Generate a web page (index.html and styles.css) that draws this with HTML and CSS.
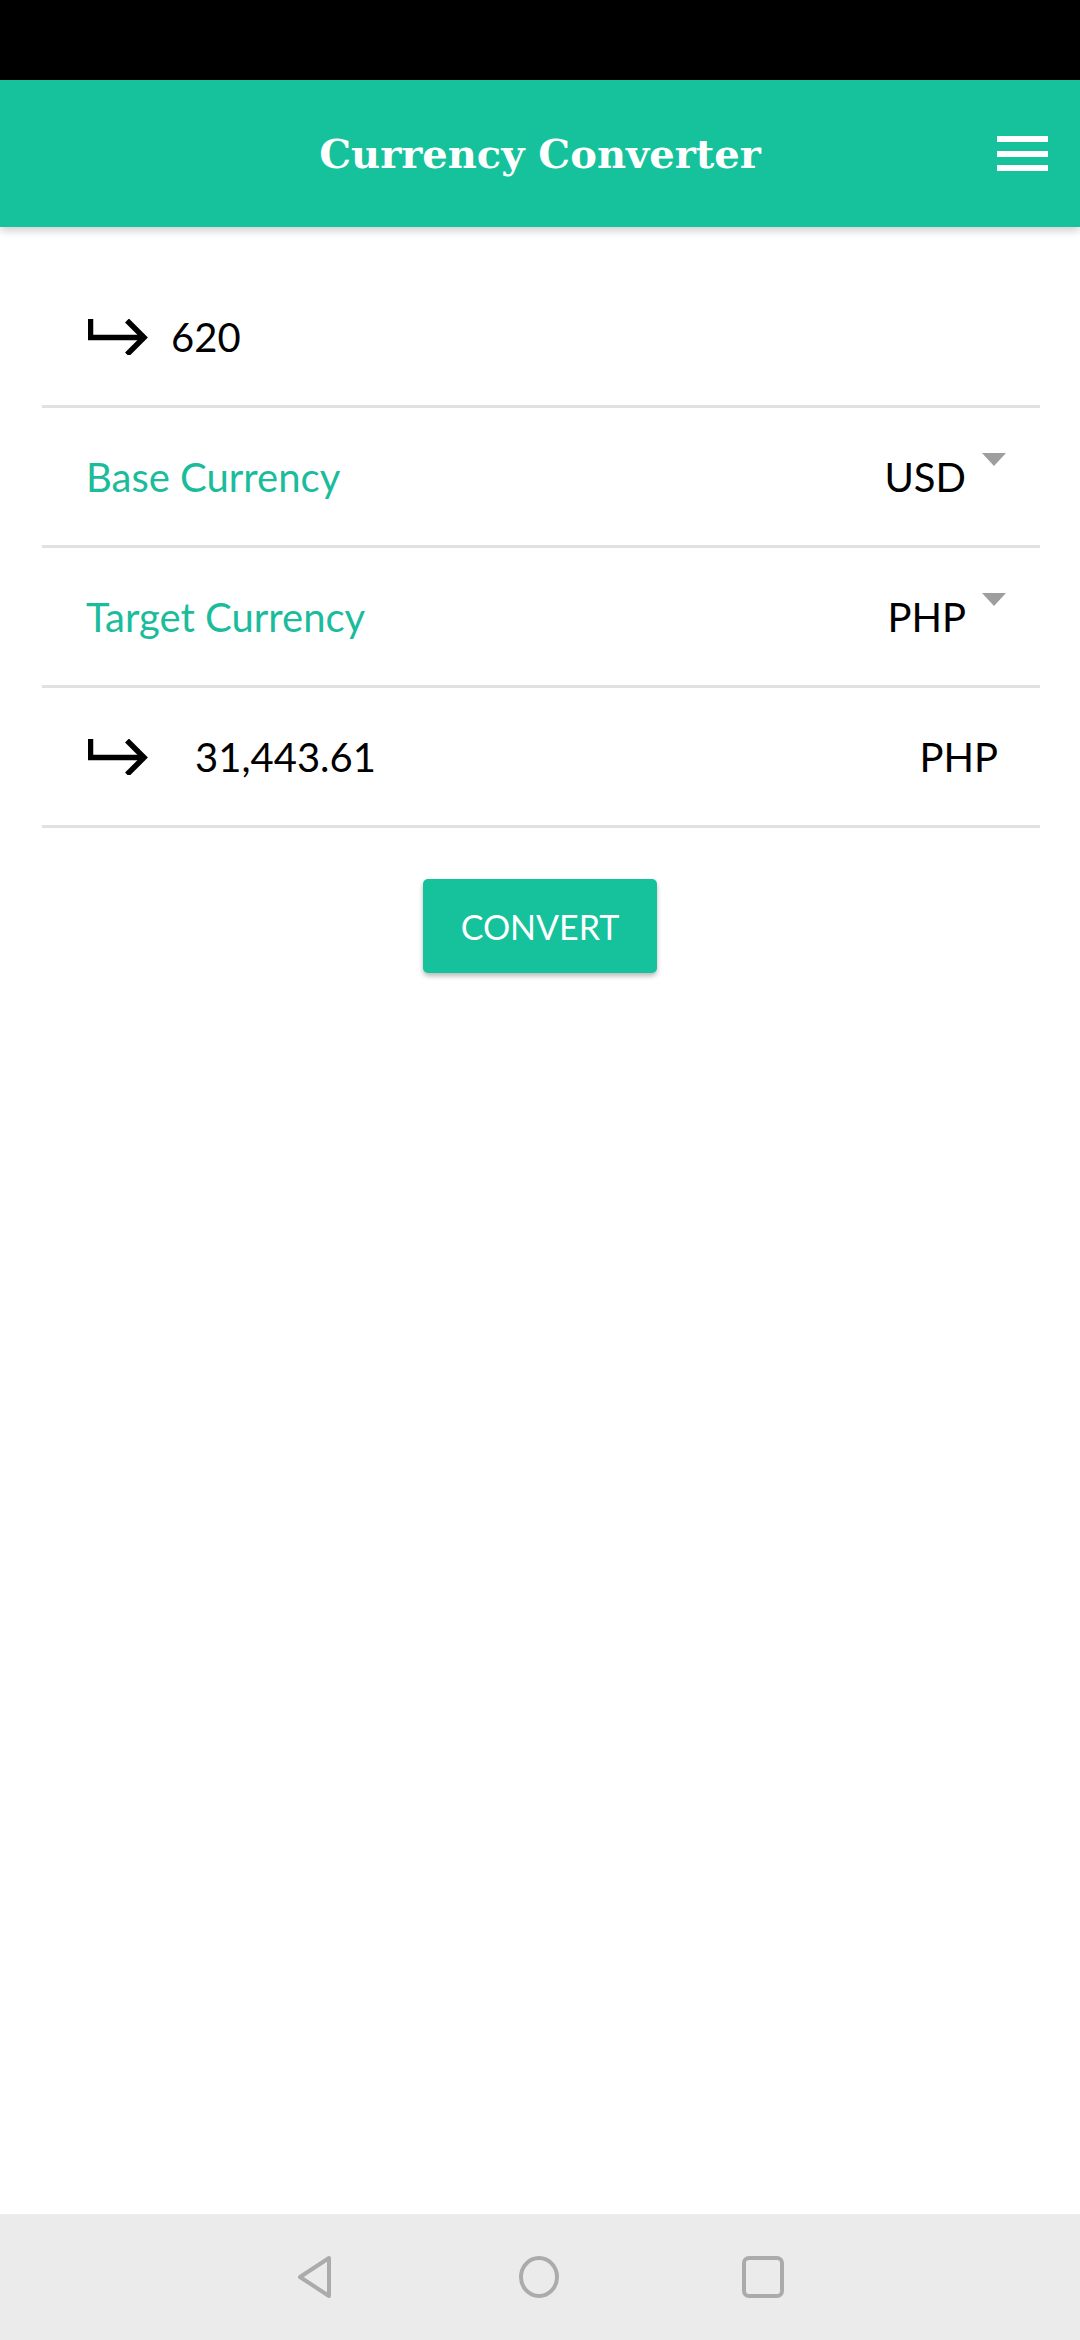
FILE: index.html
```html
<!DOCTYPE html>
<html>
<head>
<meta charset="utf-8">
<link rel="stylesheet" href="styles.css">
</head>
<body>
<div class="statusbar"></div>
<header class="appbar">
  <span></span>
  <h1 class="title">Currency Converter</h1>
  <button class="menu" aria-label="menu"><span></span><span></span><span></span></button>
</header>
<main class="form">
  <div class="row amount-row">
    <svg class="arrow" width="60" height="36" viewBox="0 0 60 36"><path d="M2.5 0V18.5H57" fill="none" stroke="#000" stroke-width="5.5"/><path d="M39 1.5L56 18.5L39 35.5" fill="none" stroke="#000" stroke-width="5.5"/></svg>
    <span class="amount">620</span>
  </div>
  <div class="row select-row">
    <span class="label">Base Currency</span>
    <span class="select">USD<i class="caret"></i></span>
  </div>
  <div class="row select-row">
    <span class="label">Target Currency</span>
    <span class="select">PHP<i class="caret"></i></span>
  </div>
  <div class="row result-row">
    <svg class="arrow" width="60" height="36" viewBox="0 0 60 36"><path d="M2.5 0V18.5H57" fill="none" stroke="#000" stroke-width="5.5"/><path d="M39 1.5L56 18.5L39 35.5" fill="none" stroke="#000" stroke-width="5.5"/></svg>
    <span class="result">31,443.61</span>
    <span class="result-cur">PHP</span>
  </div>
</main>
<div class="actions"><button class="convert">CONVERT</button></div>
<div class="spacer"></div>
<nav class="navbar">
  <svg width="40" height="44" viewBox="0 0 40 44"><path d="M33 3V41L4 22Z" fill="none" stroke="#ababab" stroke-width="4" stroke-linejoin="round"/></svg>
  <svg width="42" height="44" viewBox="0 0 42 44"><ellipse cx="21" cy="22" rx="18" ry="19" fill="none" stroke="#ababab" stroke-width="4"/></svg>
  <svg width="42" height="44" viewBox="0 0 42 44"><rect x="2" y="3" width="38" height="38" rx="5" fill="none" stroke="#ababab" stroke-width="4"/></svg>
</nav>
</body>
</html>
```
FILE: styles.css
```css
* { box-sizing: border-box; }
html, body { margin: 0; padding: 0; }
body {
  width: 1080px;
  height: 2340px;
  display: flex;
  flex-direction: column;
  background: #fff;
  font-family: Lato, "Noto Sans", sans-serif;
  color: #000;
}
.statusbar { height: 80px; background: #000; flex: none; }
.appbar {
  height: 147px;
  flex: none;
  background: #15c29b;
  display: grid;
  grid-template-columns: 1fr auto 1fr;
  align-items: center;
  padding: 0 32px;
  box-shadow: 0 4px 8px rgba(0,0,0,0.18);
  position: relative;
  z-index: 1;
}
.title {
  margin: 0;
  font-family: "DejaVu Serif", serif;
  font-weight: bold;
  font-size: 40px;
  color: #fff;
}
.menu {
  justify-self: end;
  width: 51px;
  height: 35px;
  padding: 0;
  border: 0;
  background: transparent;
  display: flex;
  flex-direction: column;
  justify-content: space-between;
}
.menu span { display: block; height: 6px; background: #fff; }
.form { margin: 41px 40px 0 42px; }
.row {
  height: 140px;
  border-bottom: 3px solid #e1e1e1;
  display: flex;
  align-items: center;
  font-size: 40px;
}
.amount-row { padding-left: 46px; }
.amount-row .amount { margin-left: 23px; }
.select-row { padding: 0 34px 0 44px; justify-content: space-between; }
.label { color: #1abc9c; }
.select { display: flex; align-items: center; gap: 16px; }
.caret {
  width: 0; height: 0;
  border-left: 12.5px solid transparent;
  border-right: 12.5px solid transparent;
  border-top: 13px solid #9e9e9e;
  margin-bottom: 34px;
}
.result-row { padding: 0 42px 0 46px; }
.result { margin-left: 47px; flex: 1; }
.actions { display: flex; justify-content: center; margin-top: 51px; }
.convert {
  width: 234px;
  height: 94px;
  border: 0;
  border-radius: 5px;
  background: #15c29b;
  color: #fff;
  font-family: Lato, "Noto Sans", sans-serif;
  font-size: 34px;
  box-shadow: 0 3px 5px rgba(0,0,0,0.28);
}
.spacer { flex: 1; }
.navbar {
  height: 126px;
  flex: none;
  background: #ebebeb;
  display: flex;
  justify-content: center;
  align-items: center;
  gap: 182px;
}
```
